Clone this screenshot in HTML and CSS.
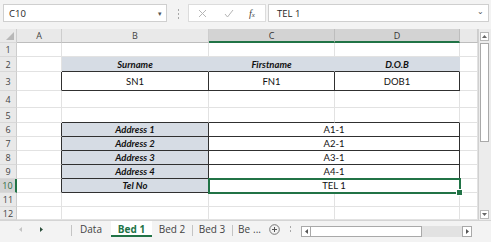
FILE: index.html
```html
<!DOCTYPE html>
<html lang="en">

<head>
	<meta charset="UTF-8">
	<meta name="viewport" content="width=device-width, initial-scale=1.0">
	<title>Bed 1</title>
	<link rel="stylesheet" href="styles.css">
</head>

<body>
	<div class="app">
		<div class="formula-bar">
			<div class="name-box"><span>C10</span><span class="caret">&#9662;</span></div>
			<div class="grip"></div>
			<div class="fx-box">
				<svg class="fx-icon" width="9" height="9" viewBox="0 0 9 9"><path d="M1 1L8 8M8 1L1 8" stroke="#b5b5b5" stroke-width="1" fill="none"/></svg>
				<svg class="fx-icon" width="10" height="9" viewBox="0 0 10 9"><path d="M1 5L3.5 8L9 1" stroke="#b5b5b5" stroke-width="1" fill="none"/></svg>
				<span class="fx"><i>f</i><small>x</small></span>
			</div>
			<div class="formula-input"><span>TEL 1</span><span class="chev">&#8964;</span></div>
		</div>

		<div class="main">
			<div class="sheet">
				<!-- column headers -->
				<div class="hd corner"><svg width="8" height="8" viewBox="0 0 8 8"><path d="M8 0V8H0Z" fill="#b8b8b8"/></svg></div>
				<div class="hd col">A</div>
				<div class="hd col">B</div>
				<div class="hd col sel">C</div>
				<div class="hd col sel">D</div>
				<div class="hd col"></div>

				<!-- row 1 -->
				<div class="hd row">1</div>
				<div class="c"></div><div class="c"></div><div class="c"></div><div class="c"></div><div class="c"></div>

				<!-- row 2 -->
				<div class="hd row">2</div>
				<div class="c"></div>
				<div class="c fill bb label">Surname</div>
				<div class="c fill bb label">Firstname</div>
				<div class="c fill bb label">D.O.B</div>
				<div class="c"></div>

				<!-- row 3 -->
				<div class="hd row">3</div>
				<div class="c br"></div>
				<div class="c br bb">SN1</div>
				<div class="c br bb">FN1</div>
				<div class="c br bb">DOB1</div>
				<div class="c"></div>

				<!-- row 4 -->
				<div class="hd row">4</div>
				<div class="c"></div><div class="c"></div><div class="c"></div><div class="c"></div><div class="c"></div>

				<!-- row 5 -->
				<div class="hd row">5</div>
				<div class="c"></div>
				<div class="c bb"></div>
				<div class="c bb"></div>
				<div class="c bb"></div>
				<div class="c"></div>

				<!-- rows 6 - 10 -->
				<div class="hd row">6</div>
				<div class="c br"></div>
				<div class="c fill br bb label">Address 1</div>
				<div class="c span br bb">A1-1</div>
				<div class="c"></div>

				<div class="hd row">7</div>
				<div class="c br"></div>
				<div class="c fill br bb label">Address 2</div>
				<div class="c span br bb">A2-1</div>
				<div class="c"></div>

				<div class="hd row">8</div>
				<div class="c br"></div>
				<div class="c fill br bb label">Address 3</div>
				<div class="c span br bb">A3-1</div>
				<div class="c"></div>

				<div class="hd row">9</div>
				<div class="c br"></div>
				<div class="c fill br bb label">Address 4</div>
				<div class="c span br bb">A4-1</div>
				<div class="c"></div>

				<div class="hd row sel">10</div>
				<div class="c br"></div>
				<div class="c fill br bb label">Tel No</div>
				<div class="c span br bb active">TEL 1</div>
				<div class="c"></div>

				<!-- rows 11 - 12 -->
				<div class="hd row">11</div>
				<div class="c"></div><div class="c"></div><div class="c"></div><div class="c"></div><div class="c"></div>

				<div class="hd row">12</div>
				<div class="c"></div><div class="c"></div><div class="c"></div><div class="c"></div><div class="c"></div>
			</div>

			<div class="vscroll">
				<div class="sb-btn"><svg width="5" height="3" viewBox="0 0 5 3"><path d="M2.5 0L5 3H0Z" fill="#666"/></svg></div>
				<div class="sb-thumb"></div>
				<div class="sb-track"></div>
				<div class="sb-btn"><svg width="5" height="3" viewBox="0 0 5 3"><path d="M0 0H5L2.5 3Z" fill="#666"/></svg></div>
			</div>
		</div>

		<div class="tab-bar">
			<div class="tab-nav">
				<svg width="3" height="5" viewBox="0 0 3 5"><path d="M3 0V5L0 2.5Z" fill="#c4c4c4"/></svg>
				<svg width="3" height="5" viewBox="0 0 3 5"><path d="M0 0V5L3 2.5Z" fill="#2b4f3b"/></svg>
			</div>
			<div class="tab sep">Data</div>
			<div class="tab current">Bed 1</div>
			<div class="tab">Bed 2</div>
			<div class="tab sep">Bed 3</div>
			<div class="tab sep more">Be <span>...</span></div>
			<svg class="add" width="11" height="11" viewBox="0 0 11 11"><circle cx="5.5" cy="5.5" r="4.8" stroke="#777" stroke-width="1" fill="none"/><path d="M5.5 3V8M3 5.5H8" stroke="#555" stroke-width="1"/></svg>
			<div class="grip small"></div>
			<div class="hscroll">
				<div class="hs-btn"><svg width="3" height="5" viewBox="0 0 3 5"><path d="M3 0V5L0 2.5Z" fill="#555"/></svg></div>
				<div class="hs-thumb"></div>
				<div class="hs-track"></div>
				<div class="hs-btn"><svg width="3" height="5" viewBox="0 0 3 5"><path d="M0 0V5L3 2.5Z" fill="#555"/></svg></div>
			</div>
		</div>
	</div>
</body>
</html>
```

FILE: styles.css
```css
* {
	box-sizing: border-box;
}

body {
	margin: 0;
	background-color: #f3f3f3;
	font-family: "Open Sans", "Liberation Sans", sans-serif;
}

.app {
	width: 491px;
	height: 242px;
	overflow: hidden;
	display: flex;
	flex-direction: column;
}

/* formula bar */
.formula-bar {
	height: 29px;
	flex: none;
	display: flex;
	align-items: flex-start;
	padding: 4px 0 0 3px;
	background-color: #f3f3f3;
}

.name-box {
	width: 164px;
	height: 18px;
	background-color: white;
	border: 1px solid #cfcfcf;
	display: flex;
	align-items: center;
	justify-content: space-between;
	padding: 0 4px 0 5px;
	font-size: 9.5px;
	color: #262626;
}

.caret {
	font-size: 7px;
	color: #555;
}

.grip {
	width: 3px;
	height: 11px;
	margin: 4px 8px 0 10px;
	background: radial-gradient(circle, #a8a8a8 0.8px, transparent 1.1px) 0 0 / 3px 4px;
}

.fx-box {
	width: 78px;
	height: 18px;
	background-color: white;
	border: 1px solid #dcdcdc;
	display: flex;
	align-items: center;
	padding-left: 9px;
	gap: 17px;
}

.fx {
	font-family: "Liberation Serif", serif;
	font-size: 10px;
	color: #444;
	margin-left: -2px;
}

.fx small {
	font-size: 7px;
	font-style: italic;
}

.formula-input {
	width: 221px;
	height: 18px;
	margin-left: 2px;
	background-color: white;
	border: 1px solid #cfcfcf;
	display: flex;
	align-items: center;
	justify-content: space-between;
	padding: 0 4px 0 8px;
	font-size: 9.5px;
	color: #262626;
}

.chev {
	font-size: 8px;
	color: #555;
	line-height: 1;
	margin-top: -4px;
}

/* sheet */
.main {
	height: 191px;
	flex: none;
	display: flex;
}

.sheet {
	width: 478px;
	display: grid;
	grid-template-columns: 17px 45px 147px 126px 125px 18px;
	grid-template-rows: 14px 14px 15px 19px 17px 15px 14px 14px 14px 14px 14px 14px 13px;
	background-color: white;
	font-family: Lato, "Liberation Sans", sans-serif;
	font-size: 9.5px;
	color: #111;
}

.c {
	border-right: 1px solid #e2e2e2;
	border-bottom: 1px solid #e2e2e2;
	display: flex;
	align-items: center;
	justify-content: center;
	white-space: nowrap;
}

.c.fill {
	background-color: #d6dce4;
	border-right-color: #d6dce4;
}

.c.br {
	border-right-color: #303030;
}

.c.bb {
	border-bottom-color: #303030;
}

.c.span {
	grid-column: span 2;
}

.label {
	font-weight: bold;
	font-style: italic;
}

.c.active {
	position: relative;
	z-index: 1;
	outline: 2px solid #217346;
	outline-offset: -1px;
}

.c.active::after {
	content: "";
	position: absolute;
	right: -4px;
	bottom: -4px;
	width: 5px;
	height: 5px;
	background-color: #217346;
	border: 1px solid white;
}

.hd {
	background-color: #e9e9e9;
	border-right: 1px solid #cdcdcd;
	border-bottom: 1px solid #d8d8d8;
	display: flex;
	align-items: center;
	justify-content: center;
	font-family: "Open Sans", "Liberation Sans", sans-serif;
	font-size: 9px;
	color: #444;
}

.hd.corner {
	align-items: flex-end;
	justify-content: flex-end;
	padding: 0 2px 2px 0;
}

.hd.col {
	border-bottom-color: #bdbdbd;
}

.hd.col.sel {
	background-color: #d3d3d3;
	border-bottom: 2px solid #217346;
	border-right-color: #bdbdbd;
	color: #333;
}

.hd.row.sel {
	background-color: #d3d3d3;
	border-right: 2px solid #217346;
	color: #2d6b46;
}

/* vertical scrollbar */
.vscroll {
	width: 13px;
	display: flex;
	flex-direction: column;
	padding: 3px 2px 1px 1px;
	gap: 2px;
	background-color: #ececec;
	border-left: 1px solid #d0d0d0;
}

.sb-btn {
	height: 9px;
	flex: none;
	background-color: white;
	border: 1px solid #b8b8b8;
	display: flex;
	align-items: center;
	justify-content: center;
}

.sb-thumb {
	height: 99px;
	flex: none;
	background-color: white;
	border: 1px solid #a9a9a9;
}

.sb-track {
	flex: 1;
}

/* sheet tabs */
.tab-bar {
	height: 22px;
	flex: none;
	display: flex;
	align-items: flex-start;
	background-color: #f3f3f3;
	border-top: 1px solid #d4d4d4;
	font-size: 10px;
	color: #444;
}

.tab-nav {
	width: 71px;
	height: 16px;
	display: flex;
	align-items: center;
	padding-left: 19px;
	gap: 18px;
}

.tab {
	width: 40px;
	height: 16px;
	display: flex;
	align-items: center;
	justify-content: center;
	white-space: nowrap;
}

.tab.sep {
	position: relative;
}

.tab.sep::before {
	content: "";
	position: absolute;
	left: 0;
	top: 4px;
	height: 11px;
	border-left: 1px solid #c4c4c4;
}

.tab:first-of-type {
	width: 36px;
}

.tab.current {
	width: 41px;
	height: 16px;
	background-color: white;
	border-bottom: 2px solid #217346;
	color: #217346;
	font-weight: bold;
	padding-top: 2px;
}

.tab.more {
	width: 37px;
	justify-content: flex-start;
	padding-left: 6px;
	gap: 3px;
}

.add {
	margin: 3px 0 0 0;
}

.grip.small {
	height: 9px;
	margin: 4px 9px 0 9px;
}

.hscroll {
	width: 171px;
	height: 11px;
	margin-top: 5px;
	display: flex;
	background-color: #e2e2e2;
}

.hs-btn {
	width: 10px;
	flex: none;
	background-color: white;
	border: 1px solid #a9a9a9;
	display: flex;
	align-items: center;
	justify-content: center;
}

.hs-thumb {
	width: 111px;
	flex: none;
	background-color: white;
	border: 1px solid #a9a9a9;
	border-left: none;
}

.hs-track {
	flex: 1;
}
```
